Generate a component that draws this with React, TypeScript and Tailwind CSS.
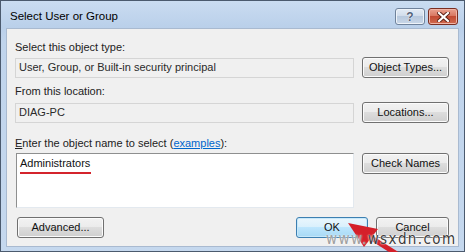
import React from 'react'

const font = "font-['Liberation_Sans',Arial,sans-serif]"

const btn =
  'flex items-center justify-center h-[21px] rounded-[3px] border border-[#707070] bg-[linear-gradient(#f2f2f2_0%,#ebebeb_50%,#dddddd_50%,#cfcfcf_100%)] shadow-[inset_0_0_0_1px_#fbfbfb] text-[11px] text-[#111]'

const okBtn =
  'flex items-center justify-center h-[21px] rounded-[3px] border border-[#3c7fb1] bg-[linear-gradient(#eaf6fd_0%,#d9f0fc_50%,#bee6fd_50%,#a7d9f5_100%)] shadow-[inset_0_0_0_1px_#c7e8fa] text-[11px] text-[#111]'

const readField =
  'flex items-center h-[20px] border border-[#d5d5d5] bg-[#f0f0f0] pl-[3px] text-[11px] text-[#2a2a2a]'

export default function App() {
  return (
    <div className={`w-[465px] h-[252px] ${font} relative overflow-hidden`}>
      <div className="flex flex-col w-full h-full border border-[#4b5a6e] bg-[linear-gradient(#cadcf1,#bad0ea_26px,#c0d4ec_40px,#c5d8ee)]">
        {/* title bar */}
        <div className="h-[27px] flex items-start pr-[6px]">
          <span className="pl-[9px] pt-[8px] text-[11.5px] leading-[14px] text-black">Select User or Group</span>
          <div className="ml-auto mt-[7px] flex gap-[3px]">
            <div className="w-[30px] h-[17px] rounded-[3px] border border-[#6f829b] bg-[linear-gradient(#e4ecf6_0%,#cfdbea_50%,#b8c9de_50%,#c9d7e8_100%)] shadow-[inset_0_0_0_1px_#eef3f9] flex items-center justify-center">
              <span className="text-[12px] leading-[12px] font-bold text-[#52627a] [text-shadow:0_0_1px_#fff,0_0_1px_#fff]">?</span>
            </div>
            <div className="w-[30px] h-[17px] rounded-[3px] border border-[#7a2e22] bg-[linear-gradient(#e9a190_0%,#d7735d_50%,#c24a33_50%,#cf6a4f_100%)] shadow-[inset_0_0_0_1px_#f0b4a6] flex items-center justify-center">
              <svg width="13" height="10" viewBox="0 0 13 10">
                <path d="M2 1 L11 9 M11 1 L2 9" stroke="#5a2016" strokeWidth="4" strokeLinecap="square" />
                <path d="M2 1 L11 9 M11 1 L2 9" stroke="#ffffff" strokeWidth="2.2" strokeLinecap="square" />
              </svg>
            </div>
          </div>
        </div>

        {/* content */}
        <div className="mx-[5px] mb-[4px] flex-1 bg-[#f0f0f0] border border-[#a9bad0] pl-[8px] pr-[9px] pt-[11px] flex flex-col">
          <div className="h-[14px] leading-[14px] text-[11px] text-[#222]">Select this object type:</div>
          <div className="mt-[3px] grid grid-cols-[1fr_87px] gap-x-[8px] items-center">
            <div className={readField}>User, Group, or Built-in security principal</div>
            <button className={btn}>Object Types...</button>
          </div>

          <div className="mt-[6px] h-[14px] leading-[14px] text-[11px] text-[#222]">From this location:</div>
          <div className="mt-[4px] grid grid-cols-[1fr_87px] gap-x-[8px] items-center">
            <div className={readField}>DIAG-PC</div>
            <button className={btn}>Locations...</button>
          </div>

          <div className="mt-[13px] h-[14px] leading-[14px] text-[11px] text-[#222]">
            <span className="underline">E</span>nter the object name to select (
            <span className="text-[#0066cc] underline">examples</span>):
          </div>
          <div className="mt-[3px] grid grid-cols-[1fr_87px] gap-x-[8px] items-start">
            <div className="ml-[1px] h-[55px] border border-[#e3e9ef] border-t-[#8e8f8f] border-l-[#8e8f8f] bg-white pl-[3px] pt-[2px]">
              <div className="text-[11px] leading-[14px] text-[#111]">Administrators</div>
              <div className="mt-[2px] w-[71px] h-[2px] bg-[#d4242c]" />
            </div>
            <button className={btn}>Check Names</button>
          </div>

          <div className="mt-[9px] flex items-center">
            <button className={`${btn} ml-[2px] w-[87px]`}>Advanced...</button>
            <button className={`${okBtn} ml-auto w-[72px]`}>OK</button>
            <button className={`${btn} ml-[8px] w-[73px]`}>Cancel</button>
          </div>
        </div>
      </div>

      {/* annotation arrow */}
      <svg className="absolute left-0 top-0 pointer-events-none" width="465" height="252" viewBox="0 0 465 252">
        <path d="M362 232 L400 256" stroke="#d4202a" strokeWidth="5" />
        <path d="M348 223 L378 229 L364 247 Z" fill="#d4202a" />
      </svg>

      {/* watermark */}
      <div className="absolute left-[326px] top-[232px] text-[15px] leading-[15px] tracking-[1.4px] font-['DejaVu_Sans_Condensed','Liberation_Sans',sans-serif] pointer-events-none">
        <span className="text-[#a0a0a0] [text-shadow:0_0_2px_#fff]">www.</span>
        <span className="text-[#3a3a3a] [text-shadow:0_0_1px_#fff,0_0_2px_#fff]">wsxdn.com</span>
      </div>
    </div>
  )
}
